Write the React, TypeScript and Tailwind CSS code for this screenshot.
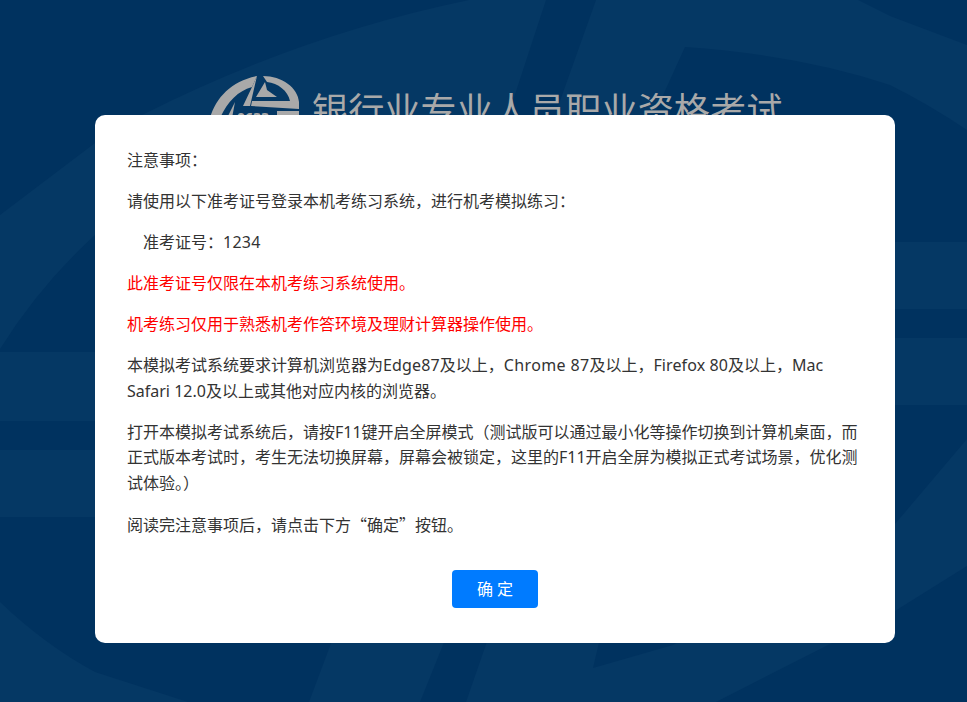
export default function App() {
  return (
    <div className="relative h-[702px] w-[967px] overflow-hidden bg-[#00325f] font-['Noto_Sans','Noto_Sans_CJK_SC',sans-serif]">
      <svg className="absolute left-0 top-0" width="967" height="702" viewBox="0 0 967 702" fill="#053864">
        <path d="M0 215L95 143L142 115Q300 35 469 0L546 0L500 140L95 235Q40 285 0 349Z" />
        <path d="M596 0L858 0L890 16L967 45L967 130Q930 105 890 85Q800 55 685 47L654 115L555 115Z" />
        <rect x="0" y="352" width="110" height="69" />
        <rect x="0" y="450" width="110" height="67" />
        <rect x="880" y="242" width="87" height="67" />
        <rect x="880" y="338" width="87" height="67" />
        <path d="M0 602Q45 645 95 672L188 702L0 702Z" />
        <path d="M336 630L309 702L420 702L449 630Z" />
        <path d="M491 630L466 702L716 702L895 611L967 566L967 439L895 524L673 645L593 668L602 630Z" />
      </svg>

      <div className="relative flex items-start pl-[210px] pt-[73px]">
        <svg width="92" height="60" viewBox="0 0 92 60" fill="#a9a9a9">
          <path d="M0 45C6 24 22 8 47 3L42 14C28 18 18 28 10 45Z" />
          <path d="M47 3L42 14L33 33L40 33Z" />
          <path d="M25 29L17 45L22 45Z" />
          <path d="M53 3C72 3 88 15 89 29L89 36L41 33L42 28L80 28C78 18 68 10 57 9Z" />
          <path d="M55 9L46 24L67 24L57 17Z" />
          <path d="M67 38L89 38L89 42L67 42Z" />
          <text x="27" y="50" fontSize="14" fontWeight="700" fill="#a9a9a9">0633</text>
        </svg>
        <h1 className="ml-[10px] mt-[12px] whitespace-nowrap text-[36.2px] font-normal leading-[50px] text-[#a9a9a9]">
          银行业专业人员职业资格考试
        </h1>
      </div>

      <div className="absolute left-[95px] top-[115px] flex h-[528px] w-[800px] flex-col items-center rounded-[10px] bg-white px-8 pt-[33px]">
        <div className="w-full text-[16px] leading-[25.5px] text-[#333]">
          <p className="mb-[15.5px]">注意事项：</p>
          <p className="mb-[15.5px]">请使用以下准考证号登录本机考练习系统，进行机考模拟练习：</p>
          <p className="mb-[15.5px] pl-4">准考证号：<span className="tracking-[0.25px]">1234</span></p>
          <p className="mb-[15.5px] text-[#ff0000]">此准考证号仅限在本机考练习系统使用。</p>
          <p className="mb-[15.5px] text-[#ff0000]">机考练习仅用于熟悉机考作答环境及理财计算器操作使用。</p>
          <p className="mb-[15.5px]">
            本模拟考试系统要求计算机浏览器为<span className="tracking-[0.15px]">Edge87</span>及以上，<span className="tracking-[0.35px]">Chrome 87</span>及以上，<span className="tracking-[0.1px]">Firefox 80</span>及以上，Mac Safari 12.0及以上或其他对应内核的浏览器。
          </p>
          <p className="mb-[15.5px]">打开本模拟考试系统后，请按F11键开启全屏模式（测试版可以通过最小化等操作切换到计算机桌面，而正式版本考试时，考生无法切换屏幕，屏幕会被锁定，这里的F11开启全屏为模拟正式考试场景，优化测试体验。）</p>
          <p>
            阅读完注意事项后，请点击下方<span className="font-['Noto_Sans_CJK_SC',sans-serif]">“确定”</span>按钮。
          </p>
        </div>
        <button className="mt-[32px] h-[38px] w-[86px] rounded bg-[#007bff] pl-1 text-[16px] tracking-[4px] text-white">确定</button>
      </div>
    </div>
  );
}
